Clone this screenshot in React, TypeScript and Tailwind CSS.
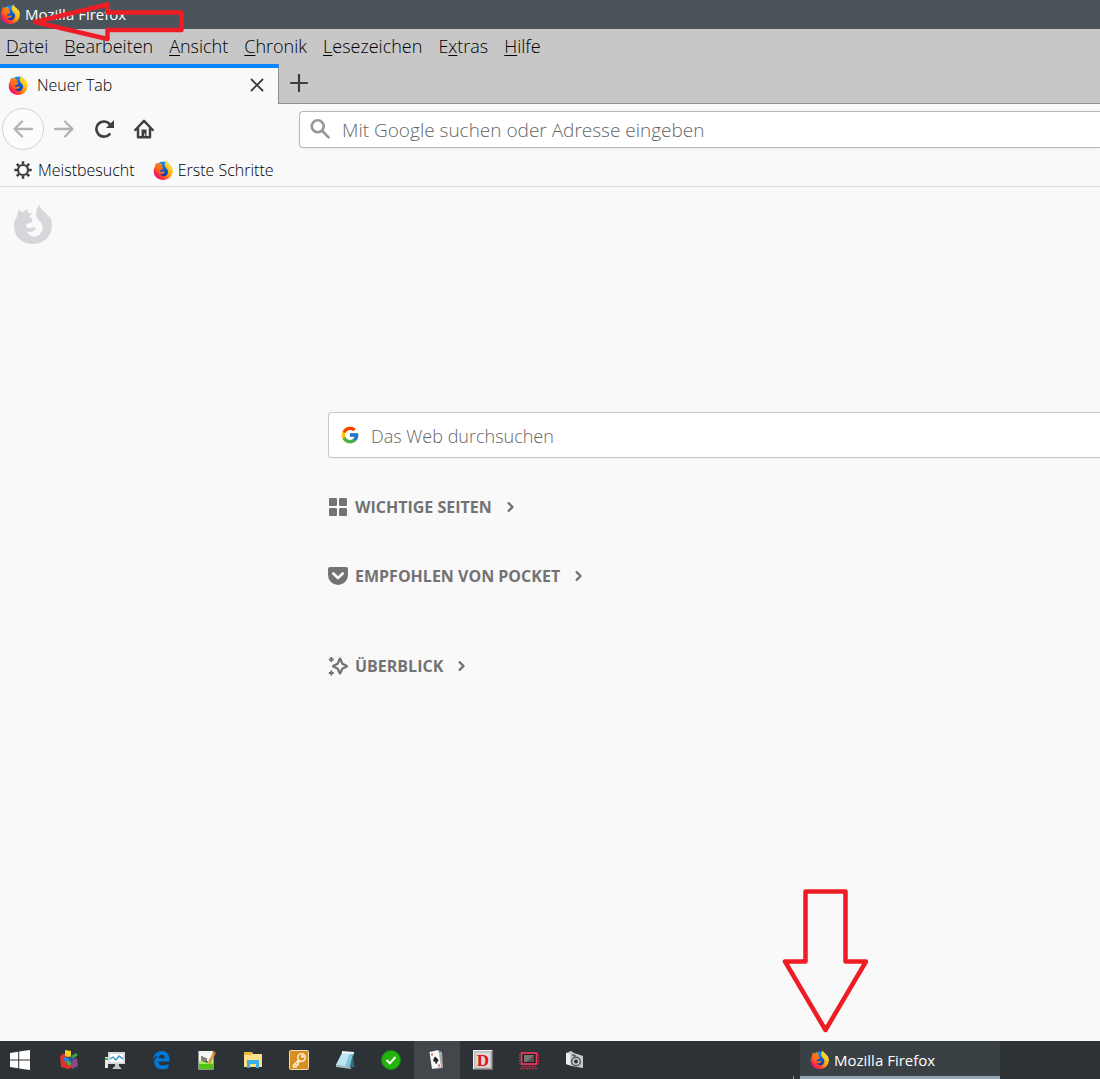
import React, { useId } from "react";
import { FcGoogle } from "react-icons/fc";

const FOX =
  "M5 4.300C6 6.300 7.500 7 9.500 6.700C11 5.300 12.500 4.500 13.800 4.300C13.300 5.800 13.500 7 14.500 8L18.300 8.500C17 9.500 16 10.500 15.300 11.700C16.500 13 18 13.500 18.500 14.300L18 17C16 18 14 18.500 12.500 19.500L12 21.500C13 23 15 23.500 17.500 22.700C19 22 20.500 22 22 22.700C21.500 24.500 20 26 18 26.500C16 27.300 14.500 27 12.700 26.500C14 29 15.500 30.500 17.500 31C20 32 23 32 25 30C27.500 28 28.800 25 28.700 21.700C28.500 19.500 27.500 18 26 16.500C23.500 14 21.700 11 22 8C22.300 5 23.500 2 25.300 0C26.500 3 28 5 31 7C33 8.500 34 10.500 34.500 13C35 11.500 35 10.500 34.800 9.500C37 13 38.300 17 38 21C37.500 32 29 39 19 39C8 39 0 32 0 21C0 17 1 14 3 11.500C3.300 9 3.800 6.500 5 4.300Z";

function Firefox({ className }: { className: string }) {
  const id = useId();
  return (
    <svg viewBox="-1 -1 41 42" className={className} aria-hidden="true">
      <defs>
        <linearGradient id={id + "f"} x1="0.9" y1="0.05" x2="0.15" y2="0.8">
          <stop offset="0" stopColor="#fff14a" />
          <stop offset="0.35" stopColor="#ffc31e" />
          <stop offset="0.6" stopColor="#ff8a12" />
          <stop offset="0.85" stopColor="#ff3a33" />
          <stop offset="1" stopColor="#f0166c" />
        </linearGradient>
        <linearGradient id={id + "g"} x1="0.5" y1="0" x2="0.5" y2="1">
          <stop offset="0" stopColor="#1295f5" />
          <stop offset="0.5" stopColor="#0a5fd0" />
          <stop offset="1" stopColor="#2a2a8c" />
        </linearGradient>
      </defs>
      <circle cx="19" cy="18" r="16" fill={`url(#${id}g)`} />
      <path d={FOX} fill={`url(#${id}f)`} />
      <path d="M5 4.300C7 7 12 7 18.300 8.300L15.300 11.700L19 14.300L18 17.500L12 20L13 26.500C6 24 3 16 3 11.500Z" fill="#ff6a1c" opacity="0.7" />
    </svg>
  );
}

function Chevron() {
  return (
    <svg viewBox="0 0 10 12" className="h-3 w-2.5" fill="none" stroke="#737373" strokeWidth="2.400" strokeLinejoin="round" aria-hidden="true">
      <path d="M2 1.500L6.500 6L2 10.500" />
    </svg>
  );
}

const menus: [string, string, string][] = [
  ["", "D", "atei"],
  ["", "B", "earbeiten"],
  ["", "A", "nsicht"],
  ["", "C", "hronik"],
  ["", "L", "esezeichen"],
  ["E", "x", "tras"],
  ["", "H", "ilfe"],
];

function MenuBar() {
  return (
    <nav aria-label="Menü" className="flex h-[35px] items-center gap-4 pb-0.5 pl-1.5 text-lg font-light text-black">
      {menus.map(([a, key, b]) => (
        <button key={key} className="whitespace-nowrap">
          {a}
          <span className="underline decoration-1 underline-offset-2">{key}</span>
          {b}
        </button>
      ))}
    </nav>
  );
}

function TabStrip() {
  return (
    <div className="flex h-10">
      <div className="flex w-[279px] shrink-0 items-center border-t-4 border-r border-t-[#0a84ff] border-r-[#8f8f8f] bg-[#f9f9fa] pb-0.5 pl-2">
        <Firefox className="size-[21px]" />
        <span className="ml-2 flex-1 text-base font-light text-black">Neuer Tab</span>
        <button aria-label="Tab schließen" className="mr-3.5">
          <svg viewBox="0 0 14 14" className="size-3.5" stroke="#3d3d3d" strokeWidth="1.8" strokeLinecap="round">
            <path d="M1.500 1.500l11 11M12.500 1.500l-11 11" />
          </svg>
        </button>
      </div>
      <div className="flex flex-1 items-center border-b border-[#8f8f8f] pb-0.5 pl-[11px]">
        <button aria-label="Neuer Tab">
          <svg viewBox="0 0 18 18" className="size-[18px]" stroke="#3d3d3d" strokeWidth="2.2" strokeLinecap="round">
            <path d="M9 1v16M1 9h16" />
          </svg>
        </button>
      </div>
    </div>
  );
}

function Toolbar() {
  return (
    <div className="flex h-[50px] items-center pl-0.5">
      <button aria-label="Zurück" className="flex size-[42px] items-center justify-center rounded-full border border-[#d4d4d5] bg-[#fcfcfc]">
        <svg viewBox="0 0 20 18" className="h-[18px] w-5" fill="none" stroke="#b3b3b3" strokeWidth="2.300" strokeLinecap="round" strokeLinejoin="round">
          <path d="M19 9H1.500M9 1.500L1.500 9L9 16.500" />
        </svg>
      </button>
      <button aria-label="Vor" className="ml-2.5">
        <svg viewBox="0 0 20 18" className="h-[18px] w-5" fill="none" stroke="#b3b3b3" strokeWidth="2.300" strokeLinecap="round" strokeLinejoin="round">
          <path d="M1 9h17.500M11 1.500L18.500 9L11 16.500" />
        </svg>
      </button>
      <button aria-label="Neu laden" className="ml-5">
        <svg viewBox="0 0 20 20" className="size-5" fill="none" stroke="#3f3f3f" strokeWidth="2.700" strokeLinecap="round">
          <path d="M15.500 15.300A7.600 7.600 0 1 1 15.600 5" />
          <path d="M20 1v8h-8z" fill="#3f3f3f" stroke="none" />
        </svg>
      </button>
      <button aria-label="Startseite" className="ml-5">
        <svg viewBox="0 0 20 20" className="size-5" fill="none" stroke="#3f3f3f" strokeWidth="2.500" strokeLinecap="round" strokeLinejoin="round">
          <path d="M1.300 11L10 1.800l8.700 9.200M4 9.500v8.700h12V9.500" />
          <path d="M7.500 17v-6.500h5V17h-1.300v-2.500h-1V17z" fill="#3f3f3f" stroke="none" />
        </svg>
      </button>
      <label className="ml-[145px] flex h-[37px] flex-1 items-center rounded-l-sm border border-r-0 border-[#b8b8b9] bg-white pl-2.5 shadow-xs">
        <svg viewBox="0 0 20 20" className="size-5 shrink-0" fill="none" stroke="#969696" strokeWidth="2.600" strokeLinecap="round" aria-hidden="true">
          <circle cx="7.700" cy="7.300" r="6" />
          <path d="M12.300 12l6.300 6.300" />
        </svg>
        <input aria-label="Adresse" placeholder="Mit Google suchen oder Adresse eingeben" className="mt-0.5 ml-3 min-w-0 flex-1 bg-transparent text-[19px] font-light outline-none placeholder:text-[#666]" />
      </label>
    </div>
  );
}

function Bookmarks() {
  return (
    <div className="flex h-[33px] items-center border-b border-[#dededf] pl-3.5 text-base font-light text-black">
      <a href="#meistbesucht" className="flex items-center">
        <svg viewBox="0 0 18 18" className="mr-1.5 size-[18px]" fill="none" stroke="#3f3f3f" aria-hidden="true">
          <circle cx="9" cy="9" r="5" strokeWidth="2.200" />
          <path d="M9 .3v3M9 14.700v3M.3 9h3M14.700 9h3M2.800 2.800l2.200 2.200M13 13l2.200 2.200M2.800 15.200L5 13M13 5l2.200-2.200" strokeWidth="2.500" />
        </svg>
        Meistbesucht
      </a>
      <a href="#erste-schritte" className="ml-[18px] flex items-center">
        <Firefox className="mr-1 size-[21px]" />
        Erste Schritte
      </a>
    </div>
  );
}

function Section({ title, icon }: { title: string; icon: React.ReactNode }) {
  return (
    <button className="flex h-6 items-center text-base font-bold text-[#737373]">
      <span className="mr-[7px] flex size-5 items-center justify-center">{icon}</span>
      <span className="mr-3.5">{title}</span>
      <Chevron />
    </button>
  );
}

function NewTab() {
  return (
    <main className="relative flex-1 pt-[225px]">
      <svg viewBox="0 0 38 40" className="absolute top-[18px] left-3.5 h-10 w-[38px]" fill="#d7d7db" aria-hidden="true">
        <path d={FOX} />
      </svg>
      <div className="pl-[328px]">
        <label className="flex h-[46px] items-center rounded-l-sm border border-r-0 border-[#c9c9ca] bg-white pl-[11px] shadow-xs">
          <FcGoogle className="size-5 shrink-0" aria-hidden="true" />
          <input aria-label="Websuche" placeholder="Das Web durchsuchen" className="mt-0.5 ml-[11px] min-w-0 flex-1 bg-transparent text-lg font-light outline-none placeholder:text-[#666]" />
        </label>
        <div className="mt-[37px]">
          <Section
            title="WICHTIGE SEITEN"
            icon={
              <svg viewBox="0 0 18 18" className="size-[18px]" fill="#737373">
                <rect width="8" height="8" rx="1.200" />
                <rect x="10" width="8" height="8" rx="1.200" />
                <rect y="10" width="8" height="8" rx="1.200" />
                <rect x="10" y="10" width="8" height="8" rx="1.200" />
              </svg>
            }
          />
        </div>
        <div className="mt-[45px]">
          <Section
            title="EMPFOHLEN VON POCKET"
            icon={
              <svg viewBox="0 0 20 18" className="h-[18px] w-5">
                <path d="M2 0h16a2 2 0 0 1 2 2v6a10 10 0 0 1-20 0V2a2 2 0 0 1 2-2z" fill="#737373" />
                <path d="M5.300 6.500L10 11l4.700-4.500" fill="none" stroke="#f9f9fa" strokeWidth="2.600" strokeLinecap="round" strokeLinejoin="round" />
              </svg>
            }
          />
        </div>
        <div className="mt-[66px]">
          <Section
            title="ÜBERBLICK"
            icon={
              <svg viewBox="0 0 20 20" className="size-5" fill="none" stroke="#737373">
                <path d="M12 2.500C12.600 2.500 13.500 7 14.500 7.900C15.500 8.800 19 9.500 19 10.200C19 11 15.500 11.700 14.500 12.600C13.500 13.500 12.700 17.500 12 17.500C11.300 17.500 10.500 13.500 9.500 12.600C8.500 11.700 5 11 5 10.200C5 9.500 8.500 8.800 9.500 7.900C10.500 7 11.400 2.500 12 2.500Z" strokeWidth="2.300" />
                <path d="M3.300 1v5M.8 3.500h5M3.300 14.500v5M.8 17h5" strokeWidth="1.900" />
              </svg>
            }
          />
        </div>
      </div>
    </main>
  );
}

const apps: { name: string; active?: boolean; art: React.ReactNode }[] = [
  {
    name: "Farbwürfel",
    art: (
      <>
        <path d="M1 6l4-3 5 8h8v5l-9 3-7-2z" fill="#e0302a" />
        <path d="M6 0l6 1v7l-6-2z" fill="#f4cf2c" />
        <path d="M12 6l5-3 2 2-5 4z" fill="#33a852" />
        <path d="M4 7l6 1v4l-6-1z" fill="#2f7ed8" />
        <path d="M7 12l4-2 2 3-3 3z" fill="#35b84b" />
        <path d="M12 10l6-2 1 8-6 3z" fill="#8a4a86" />
        <path d="M10 6l4 2-1 5-3-2z" fill="#2557a8" />
      </>
    ),
  },
  {
    name: "Systemmonitor",
    art: (
      <>
        <rect x="3" y="2" width="17" height="12" fill="#d7dadc" />
        <rect x="5" y="4" width="13" height="8" fill="#fff" />
        <path d="M5 9l3-2 3 3 3-4 4 3" fill="none" stroke="#2b8fd0" strokeWidth="1.300" />
        <path d="M10 14h4v2l3 3H7l3-3z" fill="#c4c8ca" />
        <path d="M0 7h3v11H0z" fill="#e7e7e7" />
        <path d="M0 8h3v2H0z" fill="#32bd33" />
      </>
    ),
  },
  {
    name: "Edge",
    art: (
      <path d="M2 9C3 4 6 1 10.500 1C16 1 18.500 5 18.500 9v2.500H7.300c.2 3 2.700 4 5 4 2 0 3.700-.5 5.200-1.400v3.700c-1.700 1-3.800 1.500-6.200 1.500C6 19.300 3.300 16 3.300 12.500c0-3 1.700-5.500 4.200-6.700C5 6 3.300 7.300 2 9zM7.500 8.300h6.300C13.800 6 12.800 4.800 10.900 4.800 9 4.800 7.800 6.300 7.500 8.300z" fill="#0078d7" />
    ),
  },
  {
    name: "Notepad++",
    art: (
      <>
        <rect x="1.500" y="1" width="15" height="18.500" fill="#f4f6f1" />
        <path d="M2 11h14v8H2z" fill="#a8ec62" />
        <path d="M2 14h14v5H2z" fill="#4fc414" />
        <path d="M5 6v5M7 7v5M9 8v4h2M13 9v3" stroke="#333" strokeWidth="1.200" fill="none" />
        <path d="M16.500 1l2.500 1.500-5.500 11-2 1.500v-3z" fill="#d79b3a" />
        <path d="M16.500 1l2.500 1.500-.8 1.600-2.500-1.400z" fill="#c24b35" />
      </>
    ),
  },
  {
    name: "Explorer",
    art: (
      <>
        <path d="M1 2h8l1 2h9v13H1z" fill="#fbe08a" />
        <path d="M1 2h8v3H1z" fill="#efb93a" />
        <path d="M4 10h12v8h-3v-4H7v4H4z" fill="#3bb0e5" />
      </>
    ),
  },
  {
    name: "Schlüssel",
    art: (
      <>
        <rect x="0.500" y="0.500" width="19" height="19" rx="1" fill="#d98f20" stroke="#f1ddb2" />
        <g fill="none" stroke="#fff0cf" strokeWidth="1.500">
          <circle cx="12.500" cy="7.500" r="3.700" />
          <path d="M9.800 10L4.500 15v2H7v-2h2v-2l2-2" />
          <circle cx="13.500" cy="6.500" r="0.700" />
        </g>
      </>
    ),
  },
  {
    name: "Editor",
    art: (
      <>
        <path d="M7 3l12 0-4 15-14-3z" fill="#7fc4da" />
        <path d="M7 3l8 0-5 13-9-1z" fill="#bfe6f0" />
        <path d="M7 1l12 1v2L7 3.500z" fill="#eef6f6" />
        <path d="M1 15l9 1 6 1v2L1 17z" fill="#a9b8bd" />
        <path d="M18 4l1.500 13-5 1z" fill="#376a7c" />
      </>
    ),
  },
  {
    name: "Schutz",
    art: (
      <>
        <circle cx="10" cy="10" r="9.500" fill="#24b20d" stroke="#148a12" />
        <path d="M5.500 10l3.300 3.300L14.500 7" fill="none" stroke="#fff" strokeWidth="2" />
      </>
    ),
  },
  {
    name: "Solitär",
    active: true,
    art: (
      <>
        <path d="M12 1l3 1 1 16-8 1z" fill="#a9a9a9" />
        <path d="M2.500 2l9-2 2.500 17-9 2z" fill="#fafafa" />
        <path d="M8.200 6.500c3 2.500 4 4 2.600 5.200l-1-.2.6 2H8.100l.2-2c-2.300.7-2.900-1.500-.1-5z" fill="#222" />
        <path d="M4 3.500h2v2H4zM11 14.500h2v2h-2z" fill="#d66" />
      </>
    ),
  },
  {
    name: "Wörterbuch",
    art: (
      <>
        <path d="M0 0h20v20H0z" fill="#6f6f6f" />
        <path d="M0 0h19v1.500H1.500V19H0z" fill="#f2f2f2" />
        <path d="M1.500 1.500h17v17h-17z" fill="#c9c9c9" />
        <path d="M3 3h14v14H3z" fill="#d9d9d9" />
        <text x="10" y="15.500" textAnchor="middle" fontFamily="Liberation Serif, serif" fontWeight="700" fontSize="17" fill="#e51212">
          D
        </text>
      </>
    ),
  },
  {
    name: "Rechner",
    art: (
      <>
        <rect x="2.500" y="3" width="15" height="11" fill="#202020" stroke="#e6395c" strokeWidth="1.800" />
        <path d="M5 5h10v7H5z" fill="#555" />
        <path d="M5 5h10l-8 7H5z" fill="#777" />
        <path d="M.5 4v10M19.500 4v10" stroke="#a8283f" strokeDasharray="2 1" />
        <path d="M3 16.500h14M1 18.500h18" stroke="#b52a44" strokeWidth="1.300" strokeDasharray="2 1" />
      </>
    ),
  },
  {
    name: "Kamera",
    art: (
      <>
        <path d="M1 3l5-2 3 2 9 3v12L6 16l-5-2z" fill="#c6c8c8" />
        <path d="M1 3l4 1v11l-4-1z" fill="#f0f0ef" />
        <path d="M7 4l4 1v2L7 6z" fill="#676c6e" />
        <circle cx="11" cy="11.500" r="5" fill="#555a5e" />
        <circle cx="11" cy="11.500" r="3.600" fill="#c5cacc" />
        <circle cx="11" cy="11.500" r="1.900" fill="#283039" />
      </>
    ),
  },
];

function Taskbar() {
  return (
    <footer className="flex h-[38px] shrink-0 bg-[#2d3236]">
      <button aria-label="Start" className="flex w-[46px] items-center pl-2.5">
        <svg viewBox="0 0 20 20" className="size-5" fill="#fff">
          <path d="M0 2.900l8.200-1.200v7.800H0zM9.200 1.500L20 0v9.500H9.200zM0 10.500h8.200v7.800L0 17.100zM9.200 10.500H20V20L9.200 18.500z" />
        </svg>
      </button>
      {apps.map((a) => (
        <button
          key={a.name}
          aria-label={a.name}
          className={a.active ? "flex w-[46px] items-center justify-center bg-[#41474a]" : "flex w-[46px] items-center justify-center"}
        >
          <svg viewBox="0 0 20 20" className="size-5">
            {a.art}
          </svg>
        </button>
      ))}
      <div className="ml-[195px] h-[3px] w-px self-end bg-[#8a9296]" />
      <button className="ml-[6px] flex w-[200px] items-center border-b-3 border-[#94a6b2] bg-[#3a4144] pt-[3px] pl-2.5 text-[15px] text-white">
        <Firefox className="mr-1 size-5" />
        Mozilla Firefox
      </button>
    </footer>
  );
}

export default function App() {
  return (
    <div className="relative flex min-h-screen flex-col overflow-hidden bg-[#f9f9fa] font-['Open_Sans','Noto_Sans',sans-serif] text-[#111]">
      <header>
        <div className="flex h-[29px] items-center bg-[#4c545b] text-[15px] text-white">
          <Firefox className="mr-1 size-[21px]" />
          Mozilla Firefox
        </div>
        <div className="bg-[#c7c7c7]">
          <MenuBar />
          <TabStrip />
        </div>
        <Toolbar />
        <Bookmarks />
      </header>
      <NewTab />
      <Taskbar />
      <svg viewBox="0 0 190 44" className="pointer-events-none absolute top-0 left-0 h-11 w-[190px]" fill="none" stroke="#ee1c24" strokeWidth="4.500" aria-hidden="true">
        <path d="M107.500 12.500H181.500V30H107.500V39L35 22L107.500 4.500Z" strokeLinejoin="round" />
      </svg>
      <svg viewBox="0 0 90 146" className="pointer-events-none absolute bottom-[45px] left-[780px] h-[146px] w-[90px]" fill="none" stroke="#ee1c24" strokeWidth="4.500" aria-hidden="true">
        <path d="M25.500 3.500H65.500V73.500H86L45.500 142L5 73.500H25.500Z" strokeLinejoin="round" />
      </svg>
    </div>
  );
}
